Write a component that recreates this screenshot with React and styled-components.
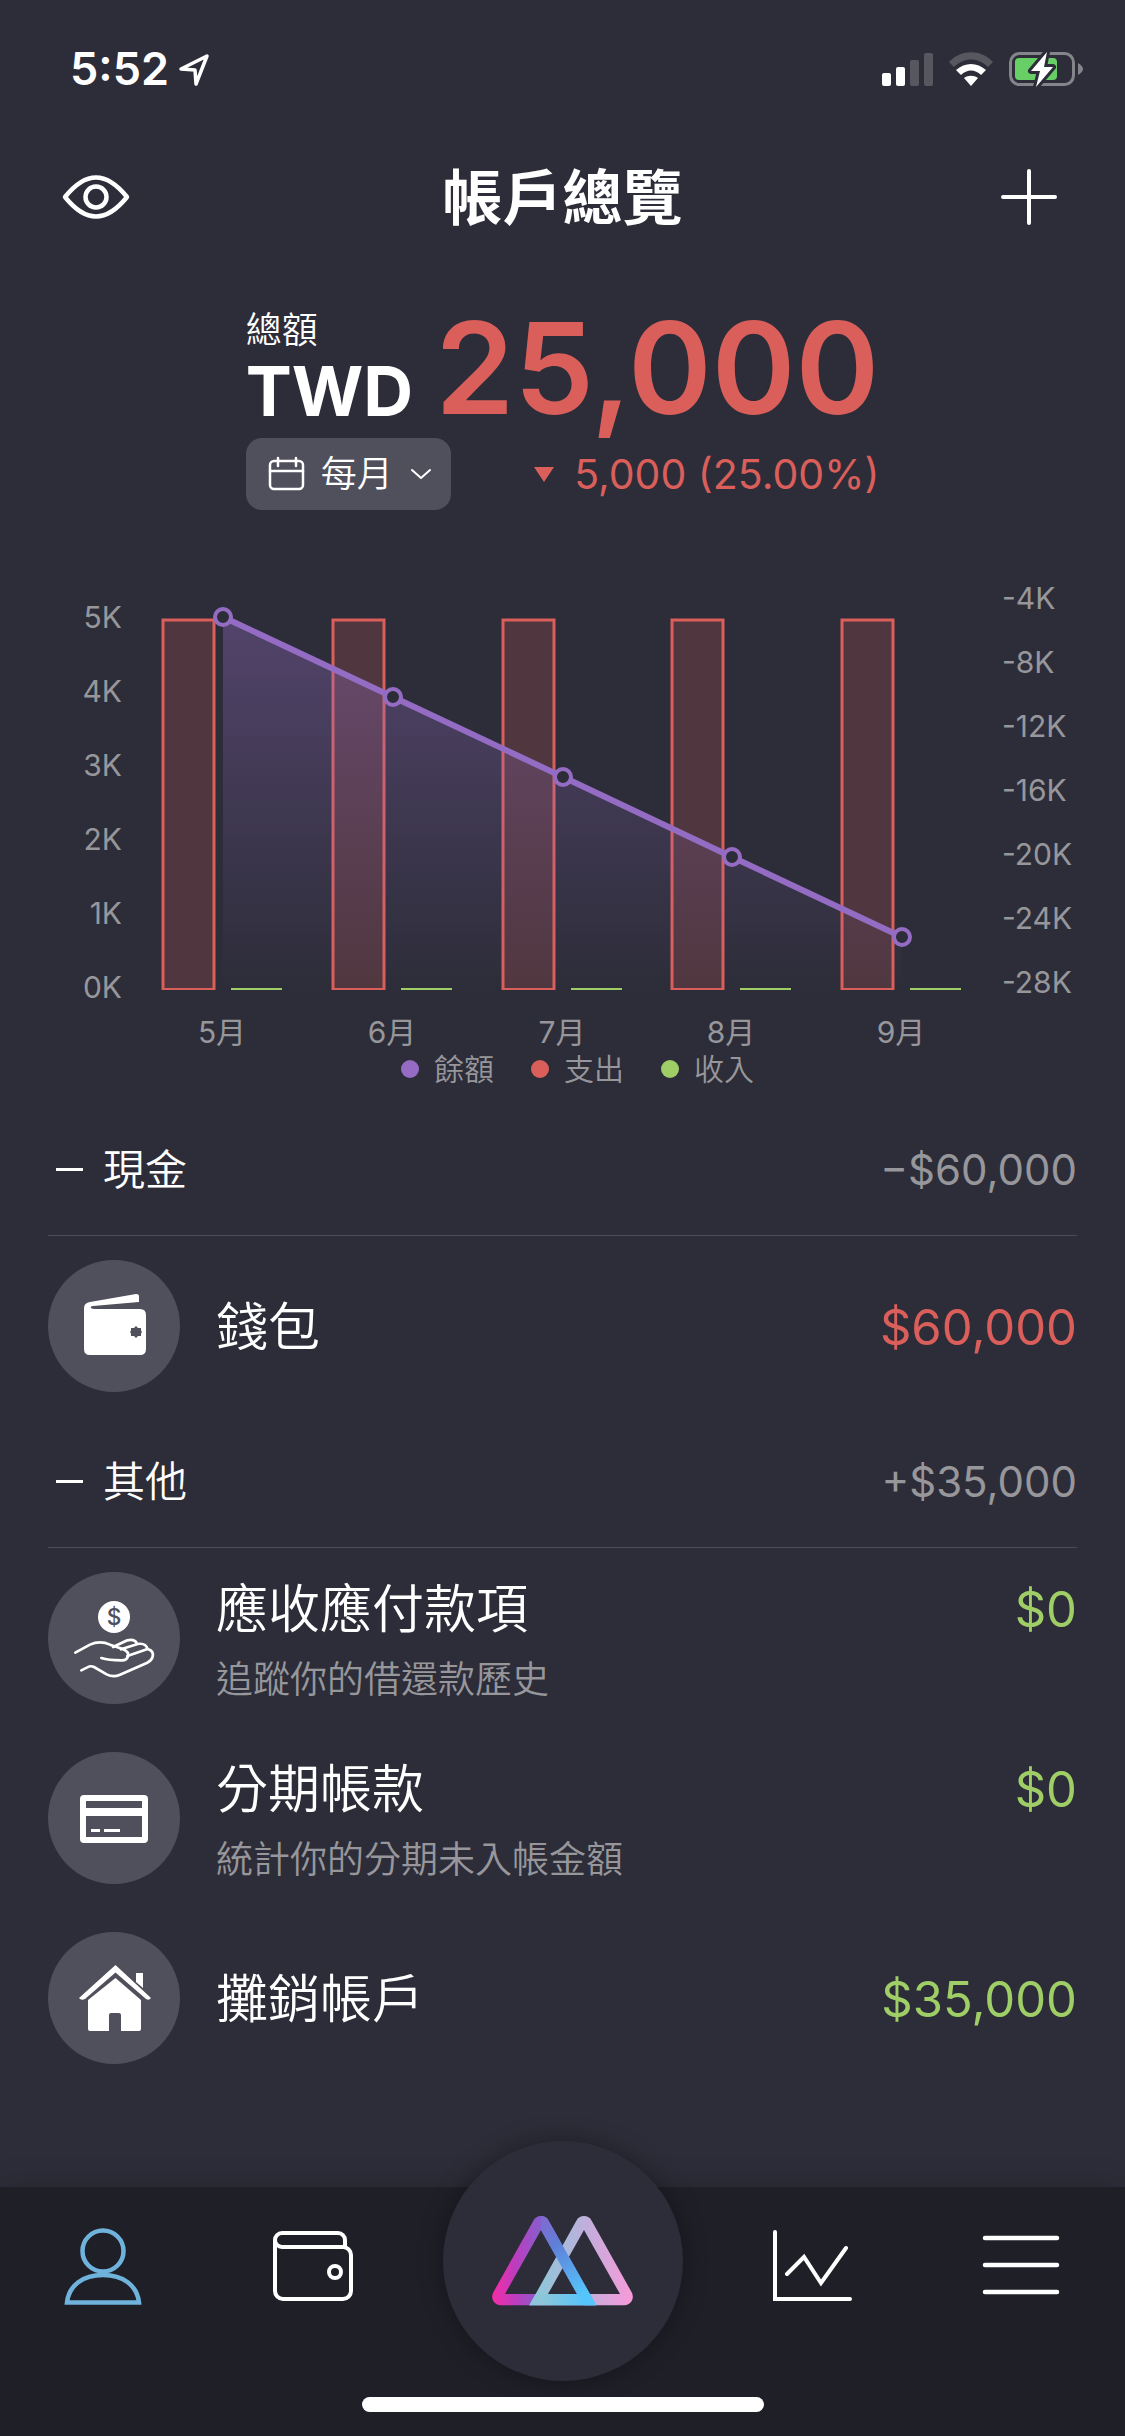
import React from 'react';
import styled, { createGlobalStyle } from 'styled-components';

const colors = {
  background: '#2d2d39',
  bar: '#1f1f28',
  surface: '#504f5c',
  line: '#4c4b57',
  text: '#ffffff',
  muted: '#97979b',
  expense: '#da5f5b',
  income: '#9fce67',
  balance: '#946cc3',
  active: '#6fb3dd',
};

const fontStack = "Inter, 'Noto Sans CJK TC', sans-serif";

const GlobalStyle = createGlobalStyle`
  * {
    box-sizing: border-box;
  }

  body {
    margin: 0;
    background: ${colors.background};
    color: ${colors.text};
    font-family: ${fontStack};
  }

  button,
  select {
    padding: 0;
    border: 0;
    background: none;
    color: inherit;
    font: inherit;
    cursor: pointer;
  }

  svg {
    display: block;
    flex: none;
  }
`;

const Screen = styled.div`
  display: flex;
  flex-direction: column;
  min-height: 100vh;
`;

const StatusBar = styled.div`
  display: flex;
  align-items: center;
  justify-content: space-between;
  height: 132px;
  padding: 6px 42px 0 70px;
`;

const StatusGroup = styled.div`
  display: flex;
  align-items: center;
  gap: ${(props) => props.$gap}px;
`;

const Clock = styled.time`
  font-size: 45px;
  font-weight: 600;
  line-height: 54px;
`;

const TopBar = styled.header`
  display: grid;
  grid-template-columns: 72px 1fr 72px;
  align-items: center;
  height: 132px;
  padding: 0 60px;
`;

const Title = styled.h1`
  margin: 0;
  font-size: 60px;
  font-weight: 600;
  line-height: 84px;
  text-align: center;
`;

const IconButton = styled.button`
  display: flex;
  justify-content: center;
`;

const Summary = styled.section`
  width: fit-content;
  margin: 0 auto;
  padding-top: 42px;
`;

const SummaryRow = styled.div`
  display: flex;
  align-items: flex-end;
  justify-content: space-between;
  gap: 22px;
`;

const Currency = styled.div`
  display: flex;
  flex-direction: column;
  height: 132px;
`;

const CurrencyLabel = styled.span`
  font-size: 36px;
  font-weight: 350;
  line-height: 48px;
`;

const CurrencyCode = styled.strong`
  font-size: 69px;
  font-weight: 700;
  line-height: 74px;
`;

const Total = styled.div`
  height: 132px;
  color: ${colors.expense};
  font-size: 127px;
  font-weight: 600;
  line-height: 124px;
`;

const PeriodPicker = styled.label`
  display: flex;
  align-items: center;
  gap: 16px;
  height: 72px;
  padding: 0 19px 0 22px;
  border-radius: 16px;
  background: ${colors.surface};
`;

const PeriodSelect = styled.select`
  appearance: none;
  font-size: 36px;
  font-weight: 350;
  line-height: 48px;
`;

const Change = styled.div`
  display: flex;
  align-items: center;
  gap: 20px;
  height: 72px;
  color: ${colors.expense};
  font-size: 41px;
`;

const ChartSection = styled.section`
  padding-top: 30px;
`;

const ChartSvg = styled.svg`
  width: 100%;
  height: auto;
`;

const AxisText = styled.text`
  fill: ${colors.muted};
  font-family: ${fontStack};
  font-size: 30px;
  font-weight: 400;
`;

const Legend = styled.ul`
  display: flex;
  justify-content: center;
  gap: 37px;
  margin: 0;
  padding: 0 0 17px 30px;
  list-style: none;
`;

const LegendItem = styled.li`
  display: flex;
  align-items: center;
  gap: 15px;
  color: ${colors.muted};
  font-size: 30px;
  font-weight: 350;
  line-height: 36px;

  &::before {
    content: '';
    width: 18px;
    height: 18px;
    border-radius: 50%;
    background: ${(props) => props.$color};
  }
`;

const Group = styled.section`
  padding: 0 48px;
`;

const GroupHeader = styled.button`
  display: flex;
  align-items: center;
  gap: 20px;
  width: 100%;
  height: 132px;
  padding-left: 8px;
  border-bottom: 1px solid ${colors.line};
  font-size: 42px;
  font-weight: 350;
  line-height: 60px;
`;

const GroupTotal = styled.span`
  margin-left: auto;
  color: ${colors.muted};
  font-weight: 400;
`;

const AccountList = styled.ul`
  margin: 0;
  padding: 0;
  list-style: none;
`;

const AccountRow = styled.li`
  display: flex;
  align-items: center;
  gap: 36px;
  height: 180px;
`;

const Avatar = styled.div`
  flex: none;
  width: 132px;
  height: 132px;
  border-radius: 50%;
  background: ${colors.surface};
`;

const AccountBody = styled.div`
  flex: 1;
  display: grid;
  grid-template-columns: 1fr auto;
  padding-top: 4px;
`;

const AccountName = styled.span`
  font-size: 52px;
  font-weight: 350;
  line-height: 80px;
`;

const AccountAmount = styled.span`
  color: ${(props) => props.$color};
  font-size: 49px;
  line-height: 80px;
`;

const AccountNote = styled.span`
  grid-column: 1 / -1;
  color: ${colors.muted};
  font-size: 37px;
  font-weight: 350;
  line-height: 60px;
`;

const TabBar = styled.footer`
  display: flex;
  flex-direction: column;
  align-items: center;
  height: 249px;
  margin-top: auto;
  background: ${colors.bar};
  box-shadow: 0 0 30px rgba(0, 0, 0, 0.15);
`;

const Tabs = styled.nav`
  display: grid;
  grid-template-columns: 1fr 1fr 292px 1fr 1fr;
  align-items: start;
  justify-items: center;
  width: 100%;
  height: 210px;
`;

const Tab = styled.button`
  display: flex;
  align-items: center;
  justify-content: center;
  width: 132px;
  height: 158px;
  color: ${(props) => (props.$active ? colors.active : colors.text)};
`;

const RecordButton = styled.button`
  display: flex;
  align-items: center;
  justify-content: center;
  width: 240px;
  height: 240px;
  margin-top: -46px;
  border-radius: 50%;
  background: ${colors.background};
  box-shadow: 0 0 24px rgba(0, 0, 0, 0.35);
`;

const HomeIndicator = styled.div`
  width: 402px;
  height: 15px;
  border-radius: 8px;
  background: ${colors.text};
`;

const LocationIcon = () => (
  <svg width="32" height="34" viewBox="0 0 32 34" fill="none" stroke="currentColor" strokeWidth="3.500" strokeLinejoin="round">
    <path d="M2 17 28 4 17 32 16 18Z" />
  </svg>
);

const SignalIcon = () => (
  <svg width="51" height="34" viewBox="0 0 51 34" fill="currentColor">
    <rect y="21" width="9" height="13" rx="2" />
    <rect x="14" y="15" width="9" height="19" rx="2" />
    <rect x="28" y="8" width="9" height="26" rx="2" opacity="0.2" />
    <rect x="42" y="1" width="9" height="33" rx="2" opacity="0.2" />
  </svg>
);

const WifiIcon = () => (
  <svg width="46" height="34" viewBox="0 0 46 34" fill="currentColor">
    <path opacity="0.2" d="M1 10C13-3 33-3 45 10L40 15C30 5 16 5 6 15Z" />
    <path d="M8 18C17 10 29 10 38 18L33 23C27 17 19 17 13 23Z" />
    <path d="M16 26C20 23 26 23 30 26L23 34Z" />
  </svg>
);

const BatteryIcon = () => (
  <svg width="74" height="40" viewBox="0 0 74 40">
    <rect x="1.500" y="4.500" width="63" height="31" rx="9" fill="none" stroke="#84848b" strokeWidth="3" />
    <path d="M69 14Q74 17 74 20T69 26Z" fill="#84848b" />
    <rect x="6" y="9" width="42" height="22" rx="4" fill="#67cf66" />
    <path
      d="M38 3 22 22H31L27 38 44 18H35Z"
      fill="#fff"
      stroke={colors.background}
      strokeWidth="6"
      strokeLinejoin="round"
      paintOrder="stroke"
    />
  </svg>
);

const EyeIcon = () => (
  <svg width="72" height="54" viewBox="0 0 72 54" fill="none" stroke="currentColor" strokeWidth="4.500" strokeLinejoin="round">
    <path d="M5 26C26 0 46 0 67 26 46 52 26 52 5 26Z" />
    <circle cx="36" cy="26" r="10.500" />
  </svg>
);

const PlusIcon = () => (
  <svg width="60" height="60" viewBox="0 0 60 60" stroke="currentColor" strokeWidth="4" strokeLinecap="round">
    <path d="M30 3V55M4 29H56" />
  </svg>
);

const CalendarIcon = () => (
  <svg width="37" height="36" viewBox="0 0 37 36" fill="none" stroke="currentColor" strokeWidth="2.500" strokeLinecap="round">
    <rect x="2" y="5" width="33" height="28" rx="4" />
    <path d="M2 15H35M10 2V10M28 2V10" />
  </svg>
);

const ChevronIcon = () => (
  <svg width="22" height="12" viewBox="0 0 22 12" fill="none" stroke="currentColor" strokeWidth="2" strokeLinecap="round" strokeLinejoin="round">
    <path d="M2 2 11 10 20 2" />
  </svg>
);

const DownIcon = () => (
  <svg width="20" height="15" viewBox="0 0 20 15" fill="currentColor">
    <path d="M0 0H20L10 15Z" />
  </svg>
);

const MinusIcon = () => (
  <svg width="27" height="3" viewBox="0 0 27 3" fill="currentColor">
    <rect width="27" height="3" />
  </svg>
);

const WalletIcon = () => (
  <svg width="132" height="132" viewBox="0 0 132 132" fill="#fff">
    <path
      fillRule="evenodd"
      d="M36 48Q36 43 42 42L88 34Q91 34 91 36V42L45 46Q42 46 43 48 44 49 47 49H92Q98 49 98 55V89Q98 95 92 95H42Q36 95 36 89ZM88 66 86 68H83V70.500L82 72 83 73.500V76H86L88 78 90 76H93V73.500L94 72 93 70.500V68H90Z"
    />
  </svg>
);

const HandCoinIcon = () => (
  <svg width="132" height="132" viewBox="24 36 396 396" fill="none" stroke="#fff" strokeWidth="8" strokeLinecap="round" strokeLinejoin="round">
    <circle cx="222" cy="171" r="48" fill="#fff" stroke="none" />
    <text x="222" y="195" textAnchor="middle" fontFamily="Inter, sans-serif" fontSize="68" fontWeight="500" fill={colors.surface} stroke="none">
      $
    </text>
    <path d="M106 278 150 254Q180 240 210 254L248 267Q268 275 264 289 260 302 244 301 205 301 184 294" />
    <path d="M219 261 262 241Q285 236 291 251M243 268 293 252Q317 248 323 267M262 288 323 267Q342 272 338 290 335 302 322 308L240 344Q220 353 200 343L162 321Q152 316 142 322L124 331" />
  </svg>
);

const CardIcon = () => (
  <svg width="132" height="132" viewBox="0 0 132 132" fill="#fff">
    <path fillRule="evenodd" d="M36 43H96Q100 43 100 47V87Q100 91 96 91H36Q32 91 32 87V47Q32 43 36 43ZM38 49V56H94V49ZM38 64V85H94V64Z" />
    <path d="M43 77H52V80H43ZM56 77H72V80H56Z" />
  </svg>
);

const HouseIcon = () => (
  <svg width="132" height="132" viewBox="0 0 132 132" fill="#fff">
    <path d="M67.500 33 103 66Q101 69 98 67L67.500 40.500 37 67Q33 69 31 66Z" />
    <path d="M88 41H95V56L88 50Z" />
    <path d="M67.500 46 93 68V97Q93 99 91 99H73V83Q73 81 71 81H63Q61 81 61 83V99H42Q40 99 40 97V68Z" />
  </svg>
);

const PersonIcon = () => (
  <svg width="80" height="80" viewBox="0 0 80 80" fill="none" stroke="currentColor" strokeWidth="4.500">
    <circle cx="39" cy="25" r="20.500" />
    <path d="M3 76.500C5 59 19 49 39 49S73 59 75 76.500Z" />
  </svg>
);

const WalletTabIcon = () => (
  <svg width="84" height="76" viewBox="0 0 84 76" fill="none" stroke="currentColor" strokeWidth="4">
    <path d="M5 12A7 7 0 0 1 12 5H68A7 7 0 0 1 75 12V19H12A7 7 0 0 1 5 12V63A8 8 0 0 0 13 71H73A8 8 0 0 0 81 63V27A8 8 0 0 0 73 19" />
    <circle cx="65" cy="44" r="6" />
  </svg>
);

const TrendIcon = () => (
  <svg width="82" height="74" viewBox="0 0 82 74" fill="none" stroke="currentColor" strokeWidth="4" strokeLinecap="round">
    <path d="M3 3V70H78M15 45 32 28 49 54 74 19" />
  </svg>
);

const MenuIcon = () => (
  <svg width="80" height="64" viewBox="0 0 80 64" stroke="currentColor" strokeWidth="4.500" strokeLinecap="round">
    <path d="M4 4H76M4 31H76M4 58H76" />
  </svg>
);

const Logo = () => (
  <svg width="144" height="92" viewBox="153 75 432 276">
    <defs>
      <linearGradient id="logo-left" gradientUnits="userSpaceOnUse" x1="165" y1="0" x2="330" y2="0">
        <stop offset="0" stopColor="#ee2fa8" />
        <stop offset="0.35" stopColor="#bf3bbd" />
        <stop offset="0.8" stopColor="#8a5ccc" />
        <stop offset="1" stopColor="#6e74d8" />
      </linearGradient>
      <linearGradient id="logo-right" gradientUnits="userSpaceOnUse" x1="290" y1="0" x2="570" y2="0">
        <stop offset="0" stopColor="#8cc8d8" />
        <stop offset="0.5" stopColor="#bdb0dc" />
        <stop offset="1" stopColor="#f59bd9" />
      </linearGradient>
      <linearGradient id="logo-leg" gradientUnits="userSpaceOnUse" x1="303" y1="90" x2="430" y2="310">
        <stop offset="0" stopColor="#806ad0" />
        <stop offset="0.35" stopColor="#5f80d8" />
        <stop offset="1" stopColor="#55c5fb" />
      </linearGradient>
      <linearGradient id="logo-base" gradientUnits="userSpaceOnUse" x1="310" y1="0" x2="430" y2="0">
        <stop offset="0" stopColor="#8cc6d8" />
        <stop offset="1" stopColor="#57c5fa" />
      </linearGradient>
    </defs>
    <path fill="url(#logo-left)" fillRule="evenodd" d="M182 346A26 26 0 0 1 160 307L280 92A26 26 0 0 1 326 92L469 346ZM195 312H411L303 120Z" />
    <path fill="url(#logo-right)" fillRule="evenodd" d="M553 346A26 26 0 0 0 575 307L455 92A26 26 0 0 0 409 92L268 346ZM540 312H324L432 120Z" />
    <path fill="url(#logo-base)" d="M268 346 287 312H450L469 346Z" />
    <path fill="url(#logo-leg)" d="M303 120V78Q319 78 326 92L469 346H430Z" />
  </svg>
);

const months = ['5月', '6月', '7月', '8月', '9月'];
const expenseScale = ['5K', '4K', '3K', '2K', '1K', '0K'];
const balanceScale = ['-4K', '-8K', '-12K', '-16K', '-20K', '-24K', '-28K'];

const BASELINE = 450;
const points = months.map((month, index) => ({
  month,
  x: 223 + Math.round((index * 679) / 4),
  y: 77 + index * 80,
}));
const linePoints = points.map((point) => `${point.x},${point.y}`).join(' ');

const BalanceChart = () => (
  <ChartSvg viewBox="0 0 1125 511" role="img" aria-label="餘額、支出、收入">
    <defs>
      <linearGradient id="balance-fill" x1="0" y1="0" x2="0" y2="1">
        <stop offset="0" stopColor={colors.balance} stopOpacity="0.36" />
        <stop offset="1" stopColor={colors.balance} stopOpacity="0" />
      </linearGradient>
    </defs>
    {expenseScale.map((label, index) => (
      <AxisText key={label} x="122" y={88 + index * 74} textAnchor="end">
        {label}
      </AxisText>
    ))}
    {balanceScale.map((label, index) => (
      <AxisText key={label} x="1002" y={69 + index * 64} textAnchor="start">
        {label}
      </AxisText>
    ))}
    {points.map(({ month, x }) => (
      <g key={month}>
        <rect x={x - 60} y="80" width="51" height={BASELINE - 80} fill={colors.expense} fillOpacity="0.2" />
        <path d={`M${x - 61} ${BASELINE - 1}H${x - 8}`} stroke={colors.expense} strokeWidth="2" />
        <path d={`M${x - 60} ${BASELINE}V80H${x - 9}V${BASELINE}`} fill="none" stroke={colors.expense} strokeWidth="3" />
        <path d={`M${x + 8} ${BASELINE - 1}H${x + 59}`} stroke={colors.income} strokeWidth="2" />
        <AxisText x={x - 1} y="503" textAnchor="middle">
          {month}
        </AxisText>
      </g>
    ))}
    <polygon points={`223,${BASELINE} ${linePoints} 902,${BASELINE}`} fill="url(#balance-fill)" />
    <polyline points={linePoints} fill="none" stroke={colors.balance} strokeWidth="6" />
    {points.map(({ month, x, y }) => (
      <circle key={month} cx={x} cy={y} r="8" fill={colors.background} stroke={colors.balance} strokeWidth="4" />
    ))}
  </ChartSvg>
);

const groups = [
  {
    name: '現金',
    total: '−$60,000',
    accounts: [{ name: '錢包', amount: '$60,000', color: colors.expense, icon: <WalletIcon /> }],
  },
  {
    name: '其他',
    total: '+$35,000',
    accounts: [
      { name: '應收應付款項', note: '追蹤你的借還款歷史', amount: '$0', color: colors.income, icon: <HandCoinIcon /> },
      { name: '分期帳款', note: '統計你的分期未入帳金額', amount: '$0', color: colors.income, icon: <CardIcon /> },
      { name: '攤銷帳戶', amount: '$35,000', color: colors.income, icon: <HouseIcon /> },
    ],
  },
];

const App = () => (
  <Screen lang="zh-Hant">
    <GlobalStyle />
    <StatusBar>
      <StatusGroup $gap={10}>
        <Clock>5:52</Clock>
        <LocationIcon />
      </StatusGroup>
      <StatusGroup $gap={15}>
        <SignalIcon />
        <WifiIcon />
        <BatteryIcon />
      </StatusGroup>
    </StatusBar>

    <TopBar>
      <IconButton type="button" aria-label="顯示金額">
        <EyeIcon />
      </IconButton>
      <Title>帳戶總覽</Title>
      <IconButton type="button" aria-label="新增帳戶">
        <PlusIcon />
      </IconButton>
    </TopBar>

    <main>
      <Summary>
        <SummaryRow>
          <Currency>
            <CurrencyLabel>總額</CurrencyLabel>
            <CurrencyCode>TWD</CurrencyCode>
          </Currency>
          <Total>25,000</Total>
        </SummaryRow>
        <SummaryRow>
          <PeriodPicker>
            <CalendarIcon />
            <PeriodSelect aria-label="週期" defaultValue="month">
              <option value="month">每月</option>
            </PeriodSelect>
            <ChevronIcon />
          </PeriodPicker>
          <Change>
            <DownIcon />
            5,000 (25.00%)
          </Change>
        </SummaryRow>
      </Summary>

      <ChartSection>
        <BalanceChart />
        <Legend>
          <LegendItem $color={colors.balance}>餘額</LegendItem>
          <LegendItem $color={colors.expense}>支出</LegendItem>
          <LegendItem $color={colors.income}>收入</LegendItem>
        </Legend>
      </ChartSection>

      {groups.map((group) => (
        <Group key={group.name}>
          <GroupHeader type="button" aria-expanded="true">
            <MinusIcon />
            <span>{group.name}</span>
            <GroupTotal>{group.total}</GroupTotal>
          </GroupHeader>
          <AccountList>
            {group.accounts.map((account) => (
              <AccountRow key={account.name}>
                <Avatar>{account.icon}</Avatar>
                <AccountBody>
                  <AccountName>{account.name}</AccountName>
                  <AccountAmount $color={account.color}>{account.amount}</AccountAmount>
                  {account.note && <AccountNote>{account.note}</AccountNote>}
                </AccountBody>
              </AccountRow>
            ))}
          </AccountList>
        </Group>
      ))}
    </main>

    <TabBar>
      <Tabs>
        <Tab type="button" $active aria-label="帳戶">
          <PersonIcon />
        </Tab>
        <Tab type="button" aria-label="錢包">
          <WalletTabIcon />
        </Tab>
        <RecordButton type="button" aria-label="記帳">
          <Logo />
        </RecordButton>
        <Tab type="button" aria-label="圖表">
          <TrendIcon />
        </Tab>
        <Tab type="button" aria-label="選單">
          <MenuIcon />
        </Tab>
      </Tabs>
      <HomeIndicator />
    </TabBar>
  </Screen>
);

export default App;
